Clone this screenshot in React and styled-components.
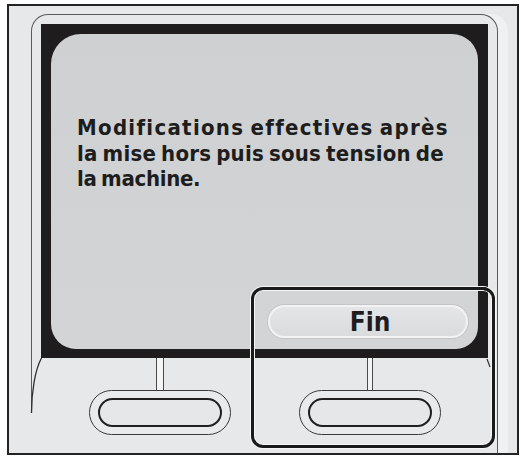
import React from "react"
import styled, { createGlobalStyle } from "styled-components"

const Global = createGlobalStyle`
  html, body {
    margin: 0;
    padding: 0;
    background: #ffffff;
  }
  body {
    font-family: "DejaVu Sans Condensed", "DejaVu Sans", sans-serif;
  }
`

const Frame = styled.div`
  position: relative;
  box-sizing: border-box;
  margin: 4px 0 0 7px;
  width: 512px;
  height: 451px;
  border: 2px solid #232323;
  background: #e7e8e9;
  padding: 8px 19px 0 22px;
  display: flex;
  flex-direction: column;
`

const Bezel = styled.div`
  position: relative;
  flex: 1;
  box-sizing: border-box;
  border: 1px solid #5a5a5a;
  border-bottom: none;
  border-radius: 17px 17px 0 0;
  padding: 9px 9px 0 9px;
  display: flex;
  flex-direction: column;
  box-shadow: 10px 0 0 #f0f1f2;

  /* left line stops above the bottom */
  &::after {
    content: "";
    position: absolute;
    left: -1px;
    bottom: 0;
    width: 1px;
    height: 40px;
    background: #e7e8e9;
  }
`

const Screen = styled.div`
  box-sizing: border-box;
  height: 334px;
  background: #1f1c1d;
  padding: 10px 10px 9px 10px;
  display: flex;
`

const Lcd = styled.div`
  flex: 1;
  min-width: 0;
  box-sizing: border-box;
  border-radius: 30px 26px 22px 25px;
  background: linear-gradient(180deg, #cfd0d2 0%, #d3d4d6 100%);
  padding: 81px 10px 11px 26px;
  display: flex;
  flex-direction: column;
`

const Message = styled.p`
  margin: 0;
  font-size: 22px;
  line-height: 25.5px;
  font-weight: bold;
  color: #1d1d1d;
  word-spacing: -2px;
  white-space: nowrap;
`

const Line = styled.span`
  display: block;
  letter-spacing: ${p => p.$ls}px;
`

const SoftButton = styled.div`
  margin-top: auto;
  align-self: flex-end;
  box-sizing: border-box;
  width: 200px;
  height: 33px;
  border-radius: 17px;
  border: 2px solid #f3f3f4;
  background: linear-gradient(180deg, #e4e5e6 0%, #dadbdc 100%);
  box-shadow: 0 0 0 1px #c4c5c7;
  display: flex;
  align-items: center;
  justify-content: center;
  padding-left: 4px;
  font-size: 26px;
  font-weight: bold;
  color: #1d1d1d;
`

const KeyRow = styled.div`
  display: flex;
  justify-content: center;
`

const KeyColumn = styled.div`
  width: 210px;
  display: flex;
  flex-direction: column;
  align-items: center;
`

const Stem = styled.div`
  box-sizing: border-box;
  width: ${p => p.$w}px;
  height: 32px;
  border-left: 1px solid #4a4a4a;
  border-right: 1px solid #4a4a4a;
  background: #f4f4f5;
`

const KeyOuter = styled.div`
  box-sizing: border-box;
  width: 142px;
  height: 45px;
  border: 1px solid #3a3a3a;
  border-radius: 23px;
  padding: 7px 8px;
  background: #e9eaeb;
`

const KeyInner = styled.div`
  box-sizing: border-box;
  height: 100%;
  border: 2.5px solid #202020;
  border-radius: 15px;
  background: #e6e7e8;
`

const Highlight = styled.div`
  position: absolute;
  left: 242px;
  top: 281px;
  width: 244px;
  height: 161px;
  box-sizing: border-box;
  border: 3px solid #1a1a1a;
  border-radius: 12px;
  box-shadow: 0 0 0 1px #f6f6f6, inset 0 0 0 1px #f6f6f6;
  pointer-events: none;
`

const Lines = styled.svg`
  position: absolute;
  left: -9px;
  top: -6px;
  pointer-events: none;
`

export default function App() {
  return (
    <>
      <Global />
      <Frame>
        <Bezel>
          <Screen>
            <Lcd>
              <Message>
                <Line $ls={1.3}>Modifications effectives après</Line>
                <Line $ls={0.2}>la mise hors puis sous tension de</Line>
                <Line $ls={-0.3}>la machine.</Line>
              </Message>
              <SoftButton>Fin</SoftButton>
            </Lcd>
          </Screen>
          <KeyRow>
            <KeyColumn>
              <Stem $w={8} />
              <KeyOuter>
                <KeyInner />
              </KeyOuter>
            </KeyColumn>
            <KeyColumn>
              <Stem $w={6} />
              <KeyOuter>
                <KeyInner />
              </KeyOuter>
            </KeyColumn>
          </KeyRow>
        </Bezel>
        <Highlight />
        <Lines width="521" height="456" viewBox="0 0 521 456">
          <path d="M41.5 358 C35 370 31.5 392 31.5 413" fill="none" stroke="#2e2e2e" strokeWidth="1.3" />
          <path d="M487 359 L490 367" fill="none" stroke="#2e2e2e" strokeWidth="1.2" />
        </Lines>
      </Frame>
    </>
  )
}
